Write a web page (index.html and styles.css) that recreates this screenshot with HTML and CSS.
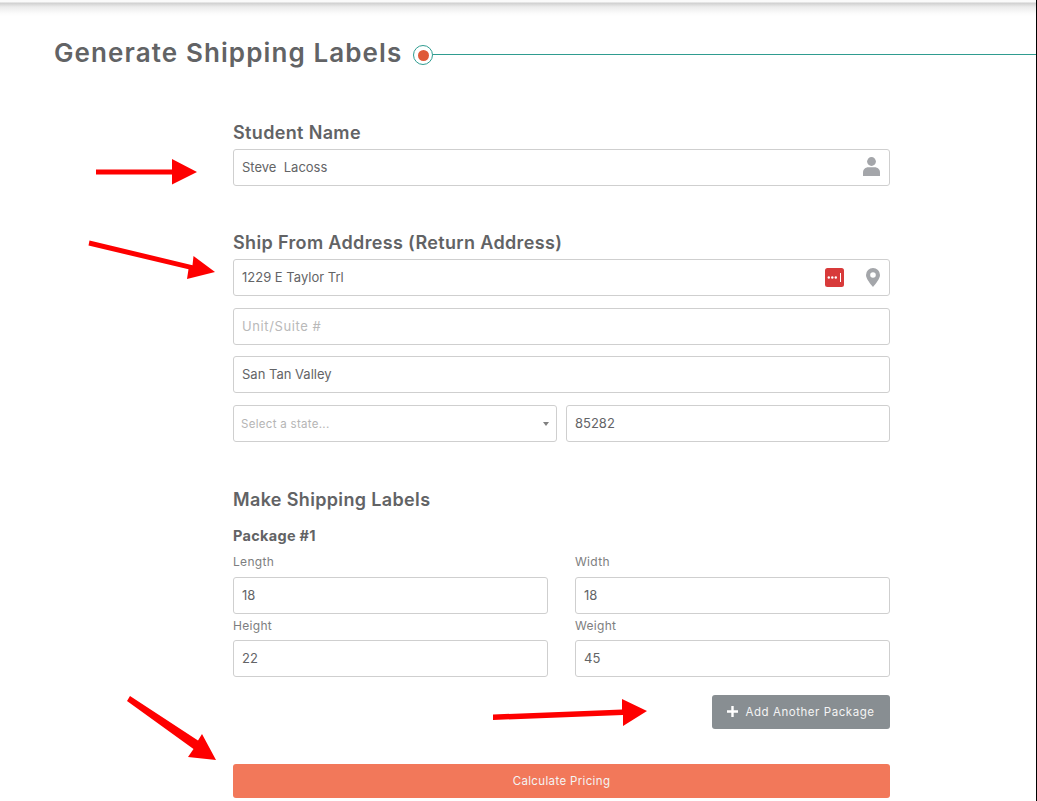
FILE: index.html
```html
<!DOCTYPE html>
<html lang="en">
<head>
<meta charset="utf-8">
<title>Generate Shipping Labels</title>
<link rel="stylesheet" href="styles.css">
</head>
<body>
<div class="page">
  <div class="topbar"></div>
  <header class="title-row">
    <h1 class="title">Generate Shipping Labels</h1>
    <span class="dot"><span class="dot-core"></span></span>
    <span class="rule"></span>
  </header>
  <main class="form">
    <section class="section-name">
      <h2 class="heading">Student Name</h2>
      <div class="field">
        <input class="input" type="text" value="Steve  Lacoss">
        <svg class="icon icon-person" viewBox="0 0 17 19"><circle cx="8.500" cy="4.500" r="4.400"/><path d="M0 19v-3.500C0 12.500 2.400 10.300 5.300 10.300h6.400c2.900 0 5.300 2.200 5.300 5.200V19z"/></svg>
      </div>
    </section>
    <section class="section-address">
      <h2 class="heading">Ship From Address (Return Address)</h2>
      <div class="stack">
        <div class="field">
          <input class="input" type="text" value="1229 E Taylor Trl">
          <svg class="icon-lastpass" viewBox="0 0 19 19"><rect width="19" height="19" rx="2.500" fill="#d83a3a"/><circle cx="3.800" cy="9.500" r="1.200" fill="#fff"/><circle cx="7.300" cy="9.500" r="1.200" fill="#fff"/><circle cx="10.800" cy="9.500" r="1.200" fill="#fff"/><rect x="15" y="5" width="1" height="9" fill="#fff"/></svg>
          <svg class="icon icon-pin" viewBox="0 0 14 19"><path fill-rule="evenodd" d="M7 0a7 7 0 0 1 7 7c0 3.600-4.600 9.200-7 12-2.400-2.800-7-8.400-7-12a7 7 0 0 1 7-7zm0 4.200a2.800 2.800 0 1 0 0 5.600 2.800 2.800 0 0 0 0-5.600z"/></svg>
        </div>
        <input class="input input-placeholder" type="text" placeholder="Unit/Suite #">
        <input class="input" type="text" value="San Tan Valley">
        <div class="state-row">
          <div class="select"><span class="select-text">Select a state...</span><span class="caret"></span></div>
          <input class="input" type="text" value="85282">
        </div>
      </div>
    </section>
    <section class="section-labels">
      <h2 class="heading">Make Shipping Labels</h2>
      <h3 class="subheading">Package #1</h3>
      <div class="dims">
        <label class="dim"><span class="dim-label">Length</span><input class="input" type="text" value="18"></label>
        <label class="dim"><span class="dim-label">Width</span><input class="input" type="text" value="18"></label>
        <label class="dim"><span class="dim-label">Height</span><input class="input" type="text" value="22"></label>
        <label class="dim"><span class="dim-label">Weight</span><input class="input" type="text" value="45"></label>
      </div>
      <div class="add-row">
        <button class="btn btn-add" type="button"><svg class="plus" viewBox="0 0 11 11"><path d="M4.300 0h2.400v4.300H11v2.400H6.700V11H4.300V6.700H0V4.300h4.300z"/></svg>Add Another Package</button>
      </div>
      <button class="btn btn-calc" type="button">Calculate Pricing</button>
    </section>
  </main>
  <svg class="arrows" viewBox="0 0 1036 801">
    <path d="M96 169.500h76V159l25 13-25 12.500V174.500H96z"/>
    <path d="M89.500 240.500l103 24.700 1-9.200L215 272l-28 7 1.500-9.700-100-23.800z"/>
    <path d="M130 696L198 740.500 202 734 216 760 188 757 193.500 749 127 701z"/>
    <path d="M493 714.500L622 709.500 622 699 647 711 623 726 623 715 493 720z"/>
  </svg>
</div>
</body>
</html>
```

FILE: styles.css
```css
* { box-sizing: border-box; }
html, body { margin: 0; padding: 0; height: 100%; background: #000; }
body { font-family: Inter, "Noto Sans", "Liberation Sans", sans-serif; color: #5f6062; }
.page { position: relative; width: 1036px; height: 801px; background: #fff; overflow: hidden; }
.topbar { height: 16px; background: linear-gradient(#fafafa 0, #fafafa 2px, #cfcfcf 3px, #ececec 7px, #fbfbfb 13px, #fff 16px); }
.title-row { display: flex; align-items: center; height: 58px; margin-top: 10px; padding-left: 54px; }
.title { margin: 0; width: 359px; font-size: 26px; font-weight: 600; letter-spacing: 1.1px; line-height: 1; white-space: nowrap; color: #626365; position: relative; top: -2px; }
.dot { flex: none; width: 20px; height: 20px; border: 1px solid #2f9c90; border-radius: 50%; display: flex; align-items: center; justify-content: center; }
.dot-core { width: 11px; height: 11px; border-radius: 50%; background: #df5a38; }
.rule { flex: 1; align-self: flex-start; height: 1px; margin-top: 28px; background: #2f9c90; }
.form { width: 657px; margin-left: 233px; }
.section-name { padding-top: 38px; }
.section-address { padding-top: 46px; }
.section-labels { padding-top: 45px; }
.heading { margin: 0 0 5px; height: 22px; font-size: 18px; line-height: 22px; font-weight: 600; letter-spacing: .35px; color: #626365; white-space: nowrap; }
.field { position: relative; display: flex; }
.stack { display: flex; flex-direction: column; gap: 12px; }
.stack > .input:nth-child(3) { margin-top: -1px; }
.input { display: block; width: 100%; height: 37px; padding: 0 8px 2px; border: 1px solid #cfcfcf; border-radius: 3px; background: #fff; font: 400 13px/1 Inter, "Noto Sans", sans-serif; color: #636466; outline: none; }
.input-placeholder { letter-spacing: .6px; }
.input::placeholder { color: #b9b9b9; opacity: 1; }
.icon { position: absolute; fill: #a4a6aa; }
.icon-person { right: 10px; top: 8px; width: 17px; height: 19px; }
.icon-pin { right: 10px; top: 9px; width: 14px; height: 19px; }
.icon-lastpass { position: absolute; right: 46px; top: 9px; width: 19px; height: 19px; }
.state-row { display: grid; grid-template-columns: 324px 324px; gap: 9px; }
.select { display: flex; align-items: center; justify-content: space-between; height: 37px; padding: 0 7px; border: 1px solid #cfcfcf; border-radius: 3px; background: #fff; }
.select-text { font-size: 11.500px; letter-spacing: .3px; color: #b5b5b5; }
.caret { width: 0; height: 0; border-left: 3px solid transparent; border-right: 3px solid transparent; border-top: 4px solid #808080; }
.section-labels .heading { margin-bottom: 0; height: 26px; line-height: 26px; }
.subheading { margin: 13px 0 0; height: 20px; font-size: 14.500px; line-height: 20px; font-weight: 700; letter-spacing: .3px; color: #626365; }
.dims { display: grid; grid-template-columns: 315px 315px; column-gap: 27px; margin-top: 9px; }
.dim { display: flex; flex-direction: column; }
.dim-label { height: 22px; font-size: 12px; line-height: 14px; letter-spacing: .3px; color: #7d7e80; }
.dim:nth-child(n+3) .dim-label { height: 26px; padding-top: 5px; }
.add-row { display: flex; justify-content: flex-end; margin-top: 18px; }
.btn { display: flex; align-items: center; justify-content: center; border: 0; border-radius: 3px; padding: 0 0 1px; font-family: Inter, "Noto Sans", sans-serif; font-size: 11.500px; letter-spacing: .35px; color: #f4f4f4; }
.btn-add { width: 178px; height: 34px; background: #888e92; gap: 7px; letter-spacing: .55px; }
.plus { width: 11px; height: 11px; fill: #fff; }
.btn-calc { width: 657px; height: 34px; margin-top: 35px; background: #f2785a; }
.arrows { position: absolute; left: 0; top: 0; width: 1036px; height: 801px; fill: #fe0000; pointer-events: none; }
```
